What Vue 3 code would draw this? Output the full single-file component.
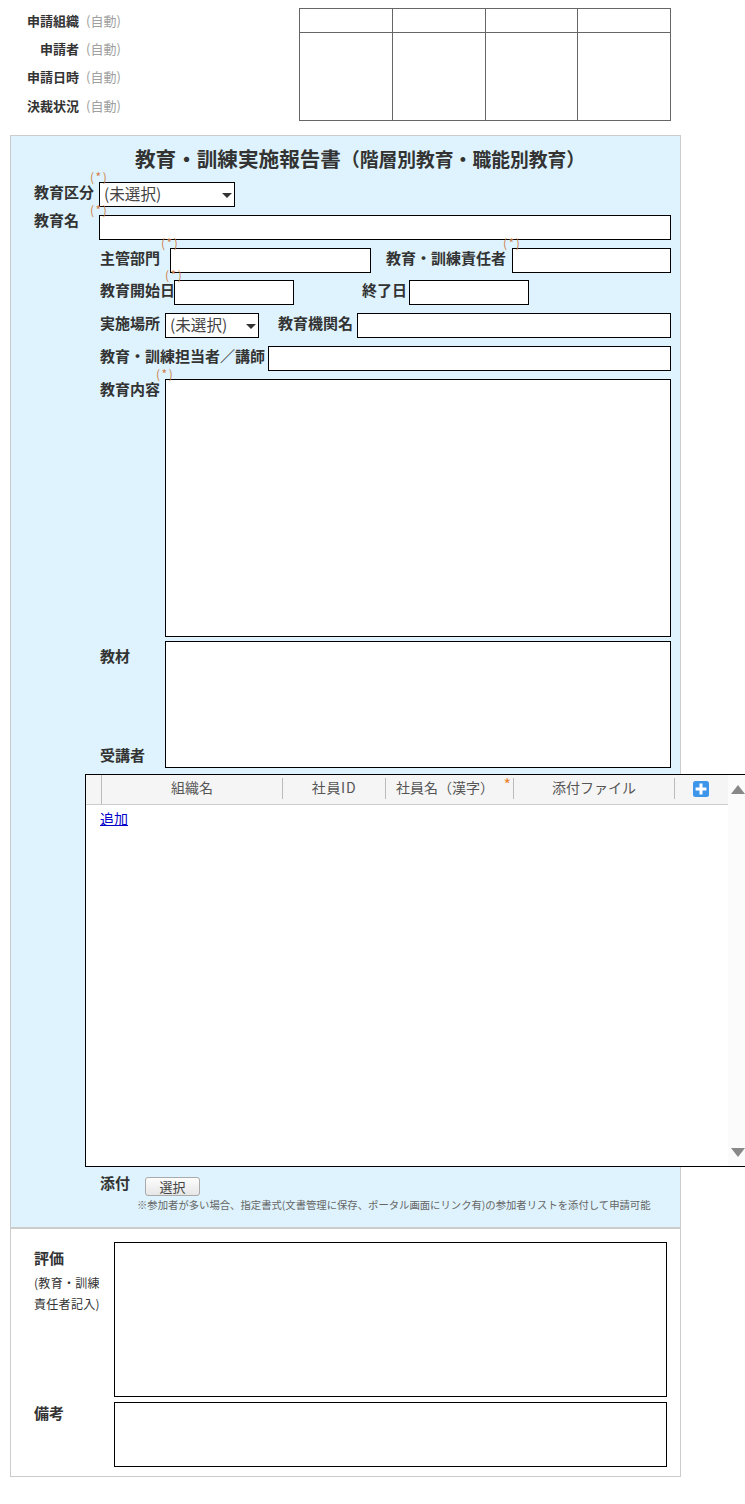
<script setup>
const meta = ['申請組織', '申請者', '申請日時', '決裁状況']
const stampCells = 8
</script>

<template>
  <div class="page">
    <header class="top">
      <dl class="meta">
        <div v-for="m in meta" :key="m" class="meta-row">
          <dt>{{ m }}</dt>
          <dd>(自動)</dd>
        </div>
      </dl>
      <div class="stamps">
        <div v-for="n in stampCells" :key="n" class="stamp"></div>
      </div>
    </header>

    <main class="box">
      <section class="blue">
        <h1 class="title">教育・訓練実施報告書<small>（階層別教育・職能別教育）</small></h1>

        <div class="form">
          <div class="row outdent">
            <label class="lab w65">教育区分</label>
            <div class="field w136">
              <div class="pick" role="combobox">(未選択)</div>
              <i class="caret"></i>
              <span class="req">(*)</span>
            </div>
          </div>
          <div class="row outdent">
            <label class="lab w65 up">教育名</label>
            <div class="field grow"><input type="text" /><span class="req">(*)</span></div>
          </div>
          <div class="row">
            <label class="lab w70 in">主管部門</label>
            <div class="field w201"><input type="text" /><span class="req">(*)</span></div>
            <label class="lab w126 m15">教育・訓練責任者</label>
            <div class="field grow"><input type="text" /><span class="req">(*)</span></div>
          </div>
          <div class="row tight">
            <label class="lab w74 in">教育開始日</label>
            <div class="field w120"><input type="text" /><span class="req">(*)</span></div>
            <label class="lab w47 m68">終了日</label>
            <div class="field w120"><input type="text" /></div>
          </div>
          <div class="row">
            <label class="lab w66 in">実施場所</label>
            <div class="field w94">
              <div class="pick" role="combobox">(未選択)</div>
              <i class="caret"></i>
            </div>
            <label class="lab w79 m19">教育機関名</label>
            <div class="field grow"><input type="text" /></div>
          </div>
          <div class="row">
            <label class="lab w168 in">教育・訓練担当者／講師</label>
            <div class="field grow"><input type="text" /></div>
          </div>
          <div class="row">
            <label class="lab w66 in">教育内容</label>
            <div class="field grow h258"><textarea></textarea><span class="req">(*)</span></div>
          </div>
          <div class="row mini">
            <div class="stack w66">
              <label class="lab in down">教材</label>
              <label class="lab in foot">受講者</label>
            </div>
            <div class="field grow h127"><textarea></textarea></div>
          </div>
        </div>

        <div class="grid">
          <div class="grid-main">
            <div class="grid-head">
              <div class="cell handle"></div>
              <div class="cell">組織名</div>
              <div class="cell spaced">社員ID</div>
              <div class="cell shifted">社員名（漢字）<span class="star">*</span></div>
              <div class="cell">添付ファイル</div>
              <div class="cell last">
                <svg width="16" height="16" viewBox="0 0 16 16" aria-hidden="true">
                  <rect width="16" height="16" rx="2.5" fill="#3d96ea" />
                  <path d="M8 2.6v10.8M2.6 8h10.8" stroke="#fff" stroke-width="3" />
                </svg>
              </div>
            </div>
            <a class="add" href="#">追加</a>
          </div>
          <div class="scroll">
            <i class="tri up-tri"></i>
            <i class="tri down-tri"></i>
          </div>
        </div>

        <div class="attach">
          <div class="attach-row">
            <label class="lab">添付</label>
            <button type="button">選択</button>
          </div>
          <p class="note">※参加者が多い場合、指定書式(文書管理に保存、ポータル画面にリンク有)の参加者リストを添付して申請可能</p>
        </div>
      </section>

      <section class="white">
        <div class="row">
          <div class="eval w103">
            <label class="lab down">評価</label>
            <p>(教育・訓練<br />責任者記入)</p>
          </div>
          <div class="field grow h155"><textarea></textarea></div>
        </div>
        <div class="row mini2">
          <label class="lab w103">備考</label>
          <div class="field grow h65"><textarea></textarea></div>
        </div>
      </section>
    </main>
  </div>
</template>

<style>
html, body { margin: 0; background: #fff; }
</style>

<style scoped>
* { box-sizing: border-box; }
.page {
  position: relative;
  width: 745px;
  height: 1504px;
  overflow: hidden;
  background: #fff;
  font-family: "Noto Sans CJK JP", "Liberation Sans", sans-serif;
  color: #333;
}
.top { display: flex; height: 135px; padding-top: 8px; }
.meta { margin: -2px 0 0; width: 299px; font-size: 13px; flex: none; }
.meta-row { display: flex; height: 28px; align-items: center; }
.meta-row:last-child { height: 31px; }
.meta dt { width: 79px; text-align: right; font-weight: 700; }
.meta dd { margin: 0 0 0 7px; color: #a0a0a0; }
.stamps {
  display: grid;
  grid-template-columns: 93px 93px 92px 93px;
  grid-template-rows: 24px 88px;
  width: 372px;
  height: 113px;
  border-top: 1px solid #666;
  border-left: 1px solid #666;
}
.stamp { border-right: 1px solid #666; border-bottom: 1px solid #666; }

.box { width: 671px; margin-left: 10px; border: 1px solid #ccc; height: 1342px; }
.blue { background: #def3fd; border-bottom: 2px solid #ccc; height: 1093px; }
.title {
  margin: 0;
  height: 46px;
  padding: 9px 0 0 124px;
  font-size: 20.6px;
  line-height: 26px;
  font-weight: 700;
  white-space: nowrap;
}
.title small { font-size: 18.8px; }

.form { display: flex; flex-direction: column; padding: 0 9px 0 88px; }
.row { display: flex; align-items: flex-start; margin-top: 8px; }
.row:first-child { margin-top: 0; }
.row.tight { margin-top: 7px; }
.row.mini { margin-top: 4px; }
.row.mini2 { margin-top: 5px; }
.outdent { margin-left: -65px; }

.lab {
  display: block;
  font-size: 15px;
  line-height: 20px;
  font-weight: 700;
  white-space: nowrap;
  flex: none;
}
.lab.in { padding-left: 1px; }
.lab.up { margin-top: -5px; }
.lab.down { margin-top: 5px; }
.lab.foot { margin-bottom: 3px; }
.w65 { width: 65px; flex: none; }
.w66 { width: 66px; flex: none; }
.w70 { width: 71px; }
.w74 { width: 75px; }
.w47 { width: 47px; }
.w79 { width: 79px; }
.w126 { width: 126px; }
.w168 { width: 169px; }
.w103 { width: 103px; padding-left: 23px; flex: none; }
.m15 { margin-left: 15px; }
.m19 { margin-left: 19px; }
.m68 { margin-left: 68px; }
.stack { display: flex; flex-direction: column; justify-content: space-between; height: 127px; }

.field { position: relative; height: 25px; flex: none; }
.grow { flex: 1 1 0; min-width: 0; }
.w136 { width: 136px; }
.w201 { width: 201px; }
.w120 { width: 120px; }
.w94 { width: 94px; }
.h258 { height: 258px; }
.h127 { height: 127px; }
.h155 { height: 155px; }
.h65 { height: 65px; }
input, textarea {
  display: block;
  width: 100%;
  height: 100%;
  margin: 0;
  border: 1px solid #000;
  border-radius: 0;
  background: #fff;
  outline: none;
  font-family: inherit;
}
textarea { resize: none; }
.pick {
  height: 100%;
  border: 1px solid #000;
  background: #fff;
  padding-left: 4px;
  font-size: 15.6px;
  line-height: 21px;
  color: #444;
  white-space: nowrap;
}
.caret {
  position: absolute;
  right: 3px;
  top: 11px;
  border-left: 5px solid transparent;
  border-right: 5px solid transparent;
  border-top: 5px solid #333;
  pointer-events: none;
}
.req {
  position: absolute;
  left: -9px;
  top: -11px;
  font-size: 12px;
  letter-spacing: 1.5px;
  line-height: 11px;
  color: #cf7f4a;
  white-space: nowrap;
}

.grid {
  display: flex;
  width: 662px;
  height: 393px;
  margin: 6px 0 0 74px;
  background: #fff;
  border: 1px solid #000;
  border-width: 1px 0 1px 1px;
  position: relative;
}
.grid-main { width: 642px; flex: none; }
.grid-head {
  display: grid;
  grid-template-columns: 16px 181px 103px 128px 161px 53px;
  align-items: start;
  height: 30px;
  background: #f5f5f5;
  border-bottom: 1px solid #ccc;
  font-size: 14px;
  color: #555;
}
.cell {
  position: relative;
  height: 21px;
  margin-top: 3px;
  line-height: 18px;
  text-align: center;
  border-right: 1px solid #bbb;
  white-space: nowrap;
}
.cell.handle { height: 29px; margin-top: 0; }
.cell.spaced { letter-spacing: 0.7px; }
.cell.shifted { padding-right: 9px; }
.cell.last { border-right: 0; display: flex; align-items: center; justify-content: center; padding-right: 2px; }
.star {
  position: absolute;
  right: 2px;
  top: -3px;
  color: #e8842e;
  font-size: 16px;
}
.add {
  display: inline-block;
  margin: 3px 0 0 14px;
  font-size: 14px;
  line-height: 20px;
  color: #0000c8;
  text-decoration: underline;
}
.scroll {
  width: 20px;
  flex: none;
  background: #fbfbfb;
  display: flex;
  flex-direction: column;
  justify-content: space-between;
  padding: 10px 0 9px 3px;
}
.tri {
  display: block;
  width: 0;
  border-left: 7px solid transparent;
  border-right: 7px solid transparent;
}
.up-tri { border-bottom: 9px solid #888; }
.down-tri { border-top: 9px solid #888; }

.attach { padding: 5px 0 0 89px; }
.attach-row { display: flex; align-items: flex-start; }
.attach button {
  width: 55px;
  height: 19px;
  margin: 5px 0 0 16px;
  padding: 0;
  font-family: inherit;
  font-size: 13px;
  line-height: 16px;
  color: #444;
  background: linear-gradient(#fdfdfd, #e6e6e6);
  border: 1px solid #aaa;
  border-radius: 3px;
}
.attach-row .lab { width: 29px; line-height: 22px; }
.note {
  margin: 1px 0 0 37px;
  font-size: 10.35px;
  line-height: 16px;
  color: #666;
  white-space: nowrap;
}

.white { padding: 13px 13px 0 0; }
.white .row:first-child { margin-top: 0; }
.white .lab { line-height: 22px; }
.eval p {
  margin: 3px 0 0;
  font-size: 12px;
  letter-spacing: 0.3px;
  line-height: 21px;
  white-space: nowrap;
}
</style>
